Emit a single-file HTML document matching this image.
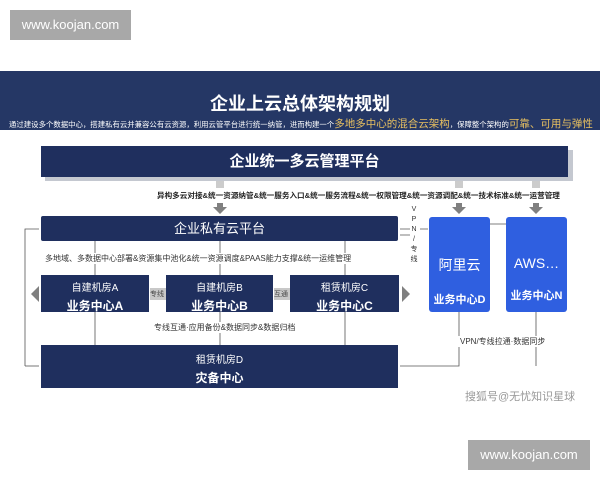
<!DOCTYPE html>
<html><head><meta charset="utf-8"><style>
*{margin:0;padding:0;box-sizing:border-box}
body{width:600px;height:480px;background:#fff;position:relative;overflow:hidden;font-family:"Liberation Sans","Noto Sans CJK SC",sans-serif}
.a{position:absolute}
.nv{background:#1f2f5e;color:#fff;text-align:center}
.bl{background:#2f5fe0;color:#fff;text-align:center;border-radius:3px}
.wm{background:#a8a8a8;color:#fff;font-size:13px;text-align:center;line-height:30px}
.tx{font-size:8px;color:#333;white-space:nowrap;background:#fff}
</style></head><body>
<div class="a wm" style="left:10px;top:10px;width:121px;height:30px">www.koojan.com</div>

<div class="a" style="left:0;top:71px;width:600px;height:59px;background:#253765"></div>
<div class="a" style="left:0;top:90px;width:600px;text-align:center;color:#fff;font-weight:bold;font-size:18px">企业上云总体架构规划</div>
<div class="a" style="left:9px;top:118px;color:#fff;font-size:7.4px;white-space:nowrap;line-height:12px">通过建设多个数据中心，搭建私有云并兼容公有云资源，利用云管平台进行统一纳管，进而构建一个<span style="color:#e8c060;font-size:10.5px">多地多中心的混合云架构</span>，保障整个架构的<span style="color:#e8c060;font-size:10.5px">可靠、可用与弹性</span></div>

<div class="a" style="left:45px;top:150px;width:528px;height:31px;background:#c4c8d0"></div>
<div class="a nv" style="left:41px;top:146px;width:527px;height:31px;font-size:15px;font-weight:bold;line-height:31px">企业统一多云管理平台</div>

<div class="a" style="left:216px;top:181px;width:8px;height:7px;background:#ccc"></div>
<div class="a" style="left:455px;top:181px;width:8px;height:7px;background:#ccc"></div>
<div class="a" style="left:532px;top:181px;width:8px;height:7px;background:#ccc"></div>
<div class="a" style="left:157px;top:190px;width:398px;height:12px;font-size:7.6px;font-weight:bold;color:#222;text-align:center;line-height:12px;white-space:nowrap">异构多云对接&amp;统一资源纳管&amp;统一服务入口&amp;统一服务流程&amp;统一权限管理&amp;统一资源调配&amp;统一技术标准&amp;统一运营管理</div>
<svg class="a" style="left:0;top:0" width="600" height="480">
<g fill="#808080">
<path d="M217 203h6v4h4l-7 7-7-7h4z"/>
<path d="M456 203h6v4h4l-7 7-7-7h4z"/>
<path d="M533 203h6v4h4l-7 7-7-7h4z"/>
<path d="M31 294l8-8v16z"/>
<path d="M410 294l-8-8v16z"/>
</g>
<g stroke="#555" stroke-width="0.8" fill="none">
<path d="M25 366V229h14"/><path d="M25 366h14"/>
<path d="M95 241v34M220 241v34M345 241v34"/>
<path d="M95 312v33M220 312v33M345 312v33"/>
<path d="M459 312v54H400M536 312v54"/>
<path d="M400 229h10M400 235h10M420 229h8M490 224h16"/>
</g>
<rect x="150" y="288" width="16" height="12" fill="#c8c8c8"/>
<rect x="274" y="288" width="16" height="12" fill="#c8c8c8"/>
</svg>

<div class="a nv" style="left:41px;top:216px;width:357px;height:25px;font-size:13px;line-height:25px;border-radius:2px">企业私有云平台</div>
<div class="a tx" style="left:45px;top:253px">多地域、多数据中心部署&amp;资源集中池化&amp;统一资源调度&amp;PAAS能力支撑&amp;统一运维管理</div>

<div class="a nv" style="left:41px;top:275px;width:108px;height:37px"><div style="font-size:10px;margin-top:4px">自建机房A</div><div style="font-size:12px;font-weight:bold;margin-top:3px">业务中心A</div></div>
<div class="a nv" style="left:166px;top:275px;width:107px;height:37px"><div style="font-size:10px;margin-top:4px">自建机房B</div><div style="font-size:12px;font-weight:bold;margin-top:3px">业务中心B</div></div>
<div class="a nv" style="left:290px;top:275px;width:109px;height:37px"><div style="font-size:10px;margin-top:4px">租赁机房C</div><div style="font-size:12px;font-weight:bold;margin-top:3px">业务中心C</div></div>
<div class="a" style="left:150px;top:289px;font-size:7px;color:#444">专线</div>
<div class="a" style="left:274px;top:289px;font-size:7px;color:#444">互通</div>

<div class="a tx" style="left:154px;top:322px">专线互通·应用备份&amp;数据同步&amp;数据归档</div>

<div class="a nv" style="left:41px;top:345px;width:357px;height:43px"><div style="font-size:10px;margin-top:6px">租赁机房D</div><div style="font-size:12px;font-weight:bold;margin-top:3px">灾备中心</div></div>

<div class="a" style="left:410px;top:205px;width:8px;font-size:7px;color:#333;line-height:10px;text-align:center">V<br>P<br>N<br>/<br>专<br>线</div>

<div class="a bl" style="left:429px;top:217px;width:61px;height:95px"><div style="font-size:14px;margin-top:38px">阿里云</div><div style="font-size:11px;font-weight:bold;margin-top:16px">业务中心D</div></div>
<div class="a bl" style="left:506px;top:217px;width:61px;height:95px"><div style="font-size:14px;margin-top:38px">AWS…</div><div style="font-size:11px;font-weight:bold;margin-top:16px">业务中心N</div></div>
<div class="a tx" style="left:458px;top:336px;padding:0 2px">VPN/专线拉通·数据同步</div>

<div class="a" style="left:465px;top:388px;font-size:11px;color:#999;white-space:nowrap">搜狐号@无忧知识星球</div>
<div class="a wm" style="left:468px;top:440px;width:122px;height:30px">www.koojan.com</div>
</body></html>
